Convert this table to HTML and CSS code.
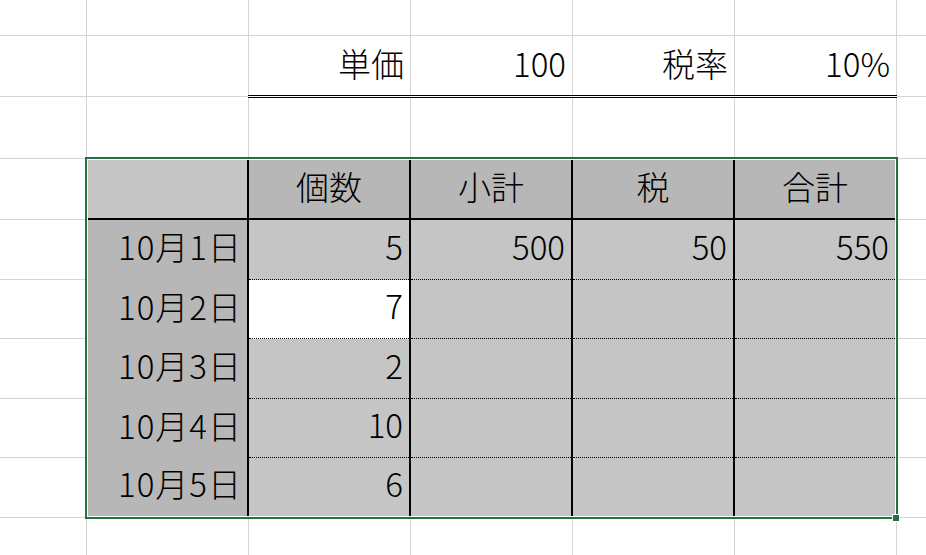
FILE: index.html
```html
<!DOCTYPE html>
<html lang="ja">
<head>
<meta charset="utf-8">
<title>Sheet</title>
<link rel="stylesheet" href="styles.css">
</head>
<body>
<div class="sheet">
  <div class="lbl c3">単価</div>
  <div class="lbl c4">100</div>
  <div class="lbl c5">税率</div>
  <div class="lbl c6">10%</div>

  <div class="tbl">
    <div class="cell h corner"></div>
    <div class="cell h">個数</div>
    <div class="cell h">小計</div>
    <div class="cell h">税</div>
    <div class="cell h">合計</div>

    <div class="cell d">10月1日</div>
    <div class="cell v">5</div>
    <div class="cell v">500</div>
    <div class="cell v">50</div>
    <div class="cell v">550</div>

    <div class="cell d">10月2日</div>
    <div class="cell v w">7</div>
    <div class="cell v"></div>
    <div class="cell v"></div>
    <div class="cell v"></div>

    <div class="cell d">10月3日</div>
    <div class="cell v">2</div>
    <div class="cell v"></div>
    <div class="cell v"></div>
    <div class="cell v"></div>

    <div class="cell d">10月4日</div>
    <div class="cell v">10</div>
    <div class="cell v"></div>
    <div class="cell v"></div>
    <div class="cell v"></div>

    <div class="cell d">10月5日</div>
    <div class="cell v last">6</div>
    <div class="cell v last"></div>
    <div class="cell v last"></div>
    <div class="cell v last"></div>

    <div class="handle"></div>
  </div>

  <!-- empty worksheet cells -->
  <div class="c"></div><div class="c"></div><div class="c"></div><div class="c"></div><div class="c"></div><div class="c"></div><div class="c"></div>
  <div class="c"></div><div class="c"></div><div class="c"></div>
  <div class="c"></div><div class="c"></div><div class="c"></div><div class="c"></div><div class="c"></div><div class="c"></div><div class="c"></div>
  <div class="c"></div><div class="c"></div>
  <div class="c"></div><div class="c"></div>
  <div class="c"></div><div class="c"></div>
  <div class="c"></div><div class="c"></div>
  <div class="c"></div><div class="c"></div>
  <div class="c"></div><div class="c"></div>
  <div class="c"></div><div class="c"></div><div class="c"></div><div class="c"></div><div class="c"></div><div class="c"></div><div class="c"></div>

  <div class="dbl"></div>
</div>
</body>
</html>
```

FILE: styles.css
```css
html, body {
  margin: 0;
  padding: 0;
  background: #ffffff;
}

.sheet {
  display: grid;
  grid-template-columns: 86px repeat(5, 161px) 29px;
  grid-template-rows: 35px 60px 61px 60px 59px 58px 59px 58px 59px 37px;
  gap: 1px;
  background: #d4d4d4;
  width: 926px;
  height: 555px;
  overflow: hidden;
  font-family: "Noto Sans CJK JP", "Noto Sans", sans-serif;
  font-size: 33px;
  font-weight: 300;
  color: #000000;
}

.c {
  background: #ffffff;
}

.lbl {
  grid-row: 2;
  background: #ffffff;
  display: flex;
  align-items: center;
  justify-content: flex-end;
  padding: 0 6px 6px 0;
  line-height: 1;
}

.c3 { grid-column: 3; }
.c4 { grid-column: 4; }
.c5 { grid-column: 5; }
.c6 { grid-column: 6; }

.dbl {
  grid-row: 2;
  grid-column: 3 / 7;
  align-self: end;
  position: relative;
  z-index: 1;
  height: 1px;
  background: #ffffff;
  border-top: 1px solid #000000;
  border-bottom: 1px solid #000000;
  margin: 0 -1px -2px -1px;
}

.tbl {
  grid-row: 4 / 10;
  grid-column: 2 / 7;
  position: relative;
  border: 1px solid #ffffff;
  outline: 2px solid #217346;
  display: grid;
  grid-template-columns: 159px repeat(4, 160px);
  grid-template-rows: 60px 60px 59px 60px 59px 58px;
  column-gap: 2px;
  background: #000000;
}

.cell {
  display: flex;
  align-items: center;
  justify-content: flex-end;
  padding: 0 6px 7px 0;
  line-height: 1;
  box-sizing: border-box;
}

.h {
  background: #b7b7b7;
  border-bottom: 2px solid #000000;
  justify-content: center;
  padding: 0 0 5px 0;
}

.h.corner {
  background: #c5c5c5;
}

.d {
  background: #b7b7b7;
  letter-spacing: 1px;
  padding-right: 5px;
}

.v {
  background: #c5c5c5;
  border-bottom: 1px dotted #000000;
}

.v.last {
  border-bottom: none;
}

.v.w {
  background: #ffffff;
}

.handle {
  position: absolute;
  right: -5px;
  bottom: -6px;
  width: 6px;
  height: 6px;
  background: #217346;
  border: 1px solid #ffffff;
  z-index: 2;
}
```
